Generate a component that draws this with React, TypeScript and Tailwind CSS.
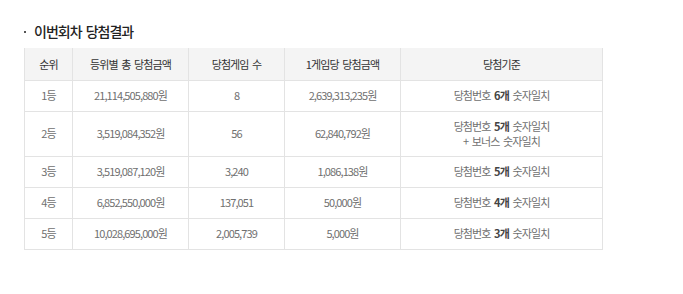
const rows = [
  { rank: "1등", total: "21,114,505,880원", games: "8", per: "2,639,313,235원", n: "6", bonus: false },
  { rank: "2등", total: "3,519,084,352원", games: "56", per: "62,840,792원", n: "5", bonus: true },
  { rank: "3등", total: "3,519,087,120원", games: "3,240", per: "1,086,138원", n: "5", bonus: false },
  { rank: "4등", total: "6,852,550,000원", games: "137,051", per: "50,000원", n: "4", bonus: false },
  { rank: "5등", total: "10,028,695,000원", games: "2,005,739", per: "5,000원", n: "3", bonus: false },
];

export default function App() {
  return (
    <div
      className="w-[683px] h-[294px] bg-white pl-[24px] pt-[22px]"
      style={{ fontFamily: '"Noto Sans CJK KR", "Noto Sans", sans-serif' }}
    >
      {/* 타이틀 */}
      <h3 className="flex items-center h-[18px] text-[14px] font-medium text-[#222] tracking-[-1px] [word-spacing:2px]">
        <span className="w-[2px] h-[2px] bg-[#555] mr-[8px] mt-[2px]" />
        이번회차 당첨결과
      </h3>

      <table className="mt-[8px] w-[578px] table-fixed border-collapse text-[11px] tracking-[-0.9px] [word-spacing:2px]">
        <thead>
          <tr className="h-[32px] bg-[#f4f4f4] text-[#333]">
            <th className="w-[48px] font-normal border-x border-[#e3e3e3]">순위</th>
            <th className="w-[116px] font-normal border-x border-[#e3e3e3]">등위별 총 당첨금액</th>
            <th className="w-[96px] font-normal border-x border-[#e3e3e3]">당첨게임 수</th>
            <th className="w-[116px] font-normal border-x border-[#e3e3e3]">1게임당 당첨금액</th>
            <th className="w-[202px] font-normal border-x border-[#e3e3e3]">당첨기준</th>
          </tr>
        </thead>
        <tbody className="text-[#707070] text-center">
          {rows.map((r) => (
            <tr key={r.rank} className={r.bonus ? "h-[45px]" : "h-[31px]"}>
              <td className="border border-[#e3e3e3]">{r.rank}</td>
              <td className="border border-[#e3e3e3]">{r.total}</td>
              <td className="border border-[#e3e3e3]">{r.games}</td>
              <td className="border border-[#e3e3e3]">{r.per}</td>
              <td className="border border-[#e3e3e3] leading-[15px]">
                당첨번호 <b className="font-bold text-[#444]">{r.n}개</b> 숫자일치
                {r.bonus && (
                  <>
                    <br />+ 보너스 숫자일치
                  </>
                )}
              </td>
            </tr>
          ))}
        </tbody>
      </table>
    </div>
  );
}
